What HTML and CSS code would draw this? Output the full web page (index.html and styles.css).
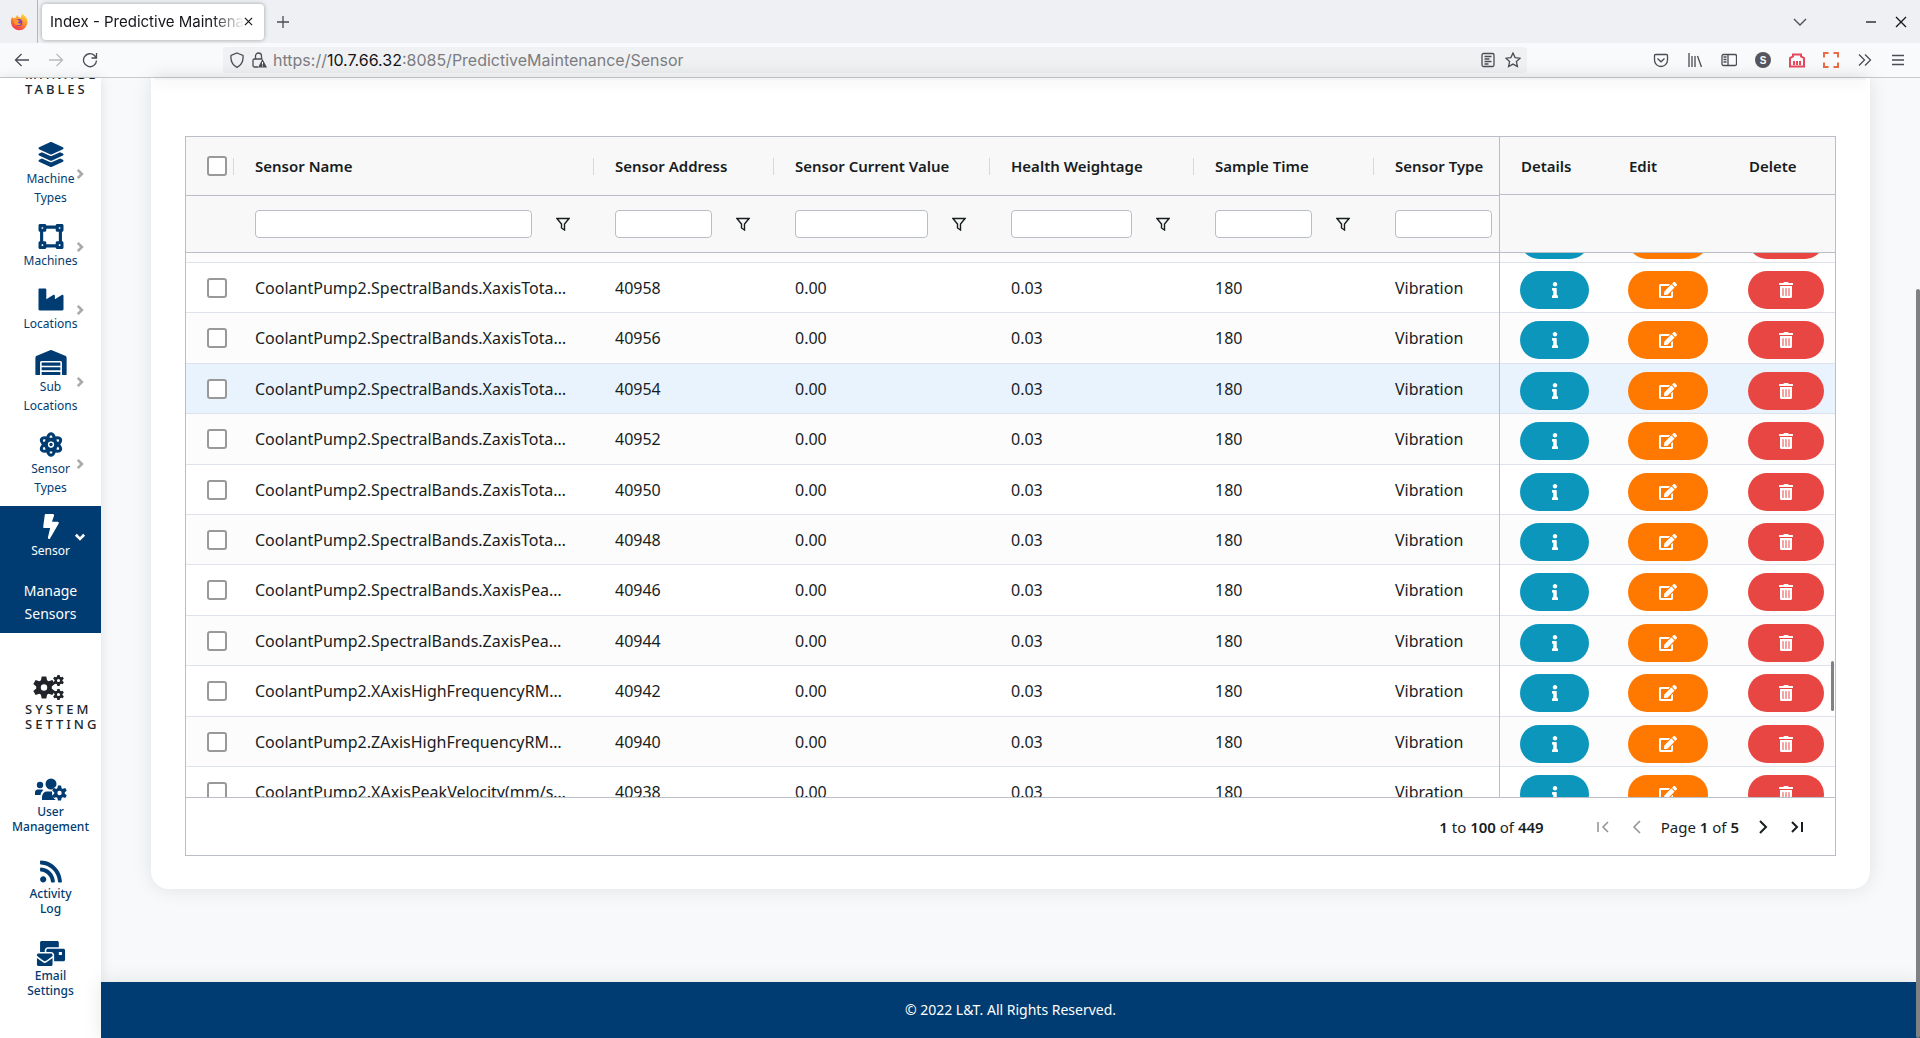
FILE: index.html
```html
<!DOCTYPE html>
<html lang="en">
<head>
    <meta charset="UTF-8">
    <meta name="viewport" content="width=device-width, initial-scale=1.0">
    <title>Index - Predictive Maintenance</title>
    <link rel="stylesheet" href="styles.css">
</head>
<body>

    <svg class="sprite" aria-hidden="true">
        <symbol id="i-info" viewBox="0 0 192 512"><path d="M20 424.229h20V279.771H20c-11.046 0-20-8.954-20-20V212c0-11.046 8.954-20 20-20h112c11.046 0 20 8.954 20 20v212.229h20c11.046 0 20 8.954 20 20V492c0 11.046-8.954 20-20 20H20c-11.046 0-20-8.954-20-20v-47.771c0-11.046 8.954-20 20-20zM96 0C56.235 0 24 32.235 24 72s32.235 72 72 72 72-32.235 72-72S135.764 0 96 0z"/></symbol>
        <symbol id="i-edit" viewBox="0 0 576 512"><path d="M402.6 83.2l90.2 90.2c3.8 3.8 3.8 10 0 13.8L274.4 405.6l-92.8 10.3c-12.4 1.4-22.9-9.1-21.5-21.5l10.3-92.8L388.8 83.2c3.8-3.8 10-3.8 13.8 0zm162-22.9l-48.8-48.8c-15.2-15.2-39.9-15.2-55.2 0l-35.4 35.4c-3.8 3.8-3.8 10 0 13.8l90.2 90.2c3.8 3.8 10 3.8 13.8 0l35.4-35.4c15.2-15.3 15.2-40 0-55.2zM384 346.2V448H64V128h229.8c3.2 0 6.2-1.3 8.5-3.5l40-40c7.6-7.6 2.2-20.5-8.5-20.5H48C21.5 64 0 85.5 0 112v352c0 26.5 21.5 48 48 48h352c26.5 0 48-21.5 48-48V306.2c0-10.7-12.9-16-20.5-8.5l-40 40c-2.2 2.3-3.5 5.3-3.5 8.5z"/></symbol>
        <symbol id="i-trash" viewBox="0 0 448 512"><path d="M32 464a48 48 0 0 0 48 48h288a48 48 0 0 0 48-48V128H32zm272-256a16 16 0 0 1 32 0v224a16 16 0 0 1-32 0zm-96 0a16 16 0 0 1 32 0v224a16 16 0 0 1-32 0zm-96 0a16 16 0 0 1 32 0v224a16 16 0 0 1-32 0zM432 32H312l-9.4-18.7A24 24 0 0 0 281.1 0H166.8a23.72 23.72 0 0 0-21.4 13.3L136 32H16A16 16 0 0 0 0 48v32a16 16 0 0 0 16 16h416a16 16 0 0 0 16-16V48a16 16 0 0 0-16-16z"/></symbol>
        <symbol id="i-filter" viewBox="0 0 14 14"><path d="M1 1.500h12L8.500 7v6L5.500 11V7z" fill="none" stroke="currentColor" stroke-width="1.400"/></symbol>
        <symbol id="i-chevron" viewBox="0 0 16 16"><path d="M5 2.500l5.500 5.500L5 13.500" fill="none" stroke="currentColor" stroke-width="3.500"/></symbol>
        <symbol id="i-gear" viewBox="-12 -12 24 24"><circle r="6" fill="none" stroke="currentColor" stroke-width="5"/><path d="M-2.500-12h5l1 5h-7zM-2.500 12h5l1-5h-7z"/><path transform="rotate(60)" d="M-2.500-12h5l1 5h-7zM-2.500 12h5l1-5h-7z"/><path transform="rotate(120)" d="M-2.500-12h5l1 5h-7zM-2.500 12h5l1-5h-7z"/></symbol>
    </svg>

    <header class="browser">
        <div class="tabs">
            <span class="fx">
                <svg width="18" height="18" viewBox="0 0 18 18"><defs><linearGradient id="fx" x1="0.800" y1="0" x2="0.300" y2="1"><stop offset="0" stop-color="#ffd83a"/><stop offset="0.500" stop-color="#ff8a2a"/><stop offset="1" stop-color="#f0304f"/></linearGradient></defs><path d="M2 4l1.500 1.500L6 4.500 7 2l2 2.500h2L12 1c4 2 5.500 5 5.500 8.500A8.300 8.300 0 0 1 1 10C.8 7.500 1 6 2 4z" fill="url(#fx)"/><circle cx="8.800" cy="9.500" r="3.500" fill="#7a3fc8"/><path d="M4 7c2-1.500 3-.5 4.500.2L10 8 8 9c0 1.500 2 2 3.500 1-1 3-6 3-7.500 0z" fill="#ff9a2a"/></svg>
            </span>
            <div class="tab">
                <span class="tab-title">Index - Predictive Maintenance</span>
                <button aria-label="Close tab"><svg width="9" height="9" viewBox="0 0 10 10"><path class="line" d="M1 1l8 8M9 1L1 9"/></svg></button>
            </div>
            <button class="new-tab" aria-label="New tab"><svg width="14" height="14" viewBox="0 0 14 14"><path class="line" d="M7 1v12M1 7h12"/></svg></button>
            <div class="window-buttons">
                <button class="list-tabs" aria-label="List all tabs"><svg width="14" height="14" viewBox="0 0 14 14"><path class="line" d="M1 4l6 6 6-6"/></svg></button>
                <button aria-label="Minimize"><svg width="12" height="12" viewBox="0 0 12 12"><path class="line" d="M1 6h10"/></svg></button>
                <button aria-label="Close window"><svg width="12" height="12" viewBox="0 0 12 12"><path class="line" d="M1 1l10 10M11 1L1 11"/></svg></button>
            </div>
        </div>
        <div class="toolbar">
            <button aria-label="Back"><svg width="16" height="16" viewBox="0 0 16 16"><path class="line" d="M15 8H1.500M7.500 2l-6 6 6 6"/></svg></button>
            <button aria-label="Forward" disabled><svg width="16" height="16" viewBox="0 0 16 16"><path class="line" d="M1 8h13.500M8.500 2l6 6-6 6"/></svg></button>
            <button aria-label="Reload"><svg width="16" height="16" viewBox="0 0 16 16"><path class="line" d="M14.500 8.500A6.500 6.500 0 1 1 12.500 3.500L14.500 6M14.500 1v5h-5"/></svg></button>
            <div class="url-bar">
                <svg width="16" height="16" viewBox="0 0 16 16"><path class="line" d="M8 1l6 2.500c.5 5-1.500 9.500-6 11.800C3.500 13 1.500 8.500 2 3.500z"/></svg>
                <svg width="16" height="16" viewBox="0 0 16 16"><path class="line" d="M4.500 7V4a3 3 0 0 1 6 0v3M7 15H3.500a1.500 1.500 0 0 1-1.500-1.500v-5A1.500 1.500 0 0 1 3.500 7h8"/><path d="M11.500 7l4.500 8.500H7z"/><path d="M11.500 10v2.500M11.500 13.500v1" stroke="#fff"/></svg>
                <span class="url">https://<b>10.7.66.32</b>:8085/PredictiveMaintenance/Sensor</span>
                <button aria-label="Reader view"><svg width="16" height="16" viewBox="0 0 16 16"><rect class="line" x="2" y="1.500" width="12" height="13" rx="1.500"/><path class="line" d="M4.500 4.500h7M4.500 7h5M4.500 9.500h7M4.500 12h4"/></svg></button>
                <button aria-label="Bookmark"><svg width="16" height="16" viewBox="0 0 16 16"><path class="line" d="M8 1l2.100 4.600 5 .6-3.700 3.400 1 5L8 12.100l-4.400 2.500 1-5L.9 6.200l5-.6z"/></svg></button>
            </div>
            <div class="tools">
                <button aria-label="Pocket"><svg width="16" height="16" viewBox="0 0 16 16"><path class="line" d="M1.500 3.500a1 1 0 0 1 1-1h11a1 1 0 0 1 1 1V8a6.500 6.500 0 0 1-13 0zM4.500 6.500L8 9.800l3.500-3.300"/></svg></button>
                <button aria-label="Library"><svg width="16" height="16" viewBox="0 0 16 16"><path class="line" d="M2 1v14M5 4v11M8 4v11M10.500 4l4 11"/></svg></button>
                <button aria-label="Sidebars"><svg width="16" height="16" viewBox="0 0 16 16"><rect class="line" x="1" y="2.500" width="14.500" height="11" rx="1.500"/><path class="line" d="M7 2.500v11M2.500 5h3M2.500 7.500h3M2.500 10h3"/></svg></button>
                <button class="account" aria-label="Account">S</button>
                <button aria-label="Extension"><svg width="16" height="16" viewBox="0 0 16 16"><path class="line bold red" d="M1 14.500V6l3-1.500V2.500h8v2L15 6v8.500zM5 9v4M8 9v4M11 9v4"/></svg></button>
                <button aria-label="Screenshot"><svg width="16" height="16" viewBox="0 0 16 16"><path class="line bold orange" d="M1 5.500V1h4.500M10.500 1H15v4.500M15 10.500V15h-4.500M5.500 15H1v-4.500"/></svg></button>
                <button aria-label="More tools"><svg width="16" height="16" viewBox="0 0 16 16"><path class="line" d="M2 2.500L7.500 8 2 13.500M8 2.500L13.500 8 8 13.500"/></svg></button>
                <button aria-label="Menu"><svg width="14" height="16" viewBox="0 0 14 16"><path class="line" d="M1 3.500h12M1 8h12M1 12.500h12"/></svg></button>
            </div>
        </div>
    </header>

    <div class="page">
        <nav class="sidebar" id="sidebar">
            <div class="nav-heading">
                <svg class="nav-icon" viewBox="0 0 24 24"><path d="M2 3h20v18H2z"/></svg>
                MANAGE<br>TABLES
            </div>

            <a class="nav-item" href="#">
                <svg class="nav-icon" viewBox="0 0 512 512"><path d="M12.410 148.020l232.940 105.670c6.800 3.090 14.490 3.090 21.290 0l232.940-105.670c16.550-7.510 16.550-32.520 0-40.030L266.650 2.310a25.607 25.607 0 0 0-21.290 0L12.410 107.980c-16.550 7.510-16.550 32.530 0 40.040zm487.180 88.280l-58.090-26.330-161.640 73.270c-7.560 3.430-15.590 5.170-23.860 5.170s-16.290-1.740-23.860-5.170L70.510 209.970l-58.100 26.330c-16.550 7.500-16.550 32.500 0 40l232.940 105.590c6.800 3.080 14.490 3.080 21.290 0L499.590 276.300c16.550-7.500 16.550-32.500 0-40zm0 127.800l-57.870-26.230-161.860 73.370c-7.560 3.430-15.590 5.170-23.860 5.170s-16.290-1.740-23.860-5.170L70.290 337.870 12.410 364.100c-16.550 7.500-16.550 32.500 0 40l232.940 105.590c6.800 3.080 14.490 3.080 21.290 0L499.590 404.100c16.550-7.500 16.550-32.500 0-40z"/></svg>
                <span>Machine<br>Types</span>
                <svg class="arrow"><use href="#i-chevron"/></svg>
            </a>
            <a class="nav-item" href="#">
                <svg class="nav-icon" viewBox="0 0 512 512"><path d="M512 128V32c0-17.670-14.330-32-32-32h-96c-17.670 0-32 14.330-32 32H160c0-17.670-14.330-32-32-32H32C14.330 0 0 14.330 0 32v96c0 17.670 14.330 32 32 32v192c-17.670 0-32 14.330-32 32v96c0 17.670 14.330 32 32 32h96c17.670 0 32-14.330 32-32h192c0 17.670 14.330 32 32 32h96c17.670 0 32-14.330 32-32v-96c0-17.670-14.330-32-32-32V160c17.670 0 32-14.330 32-32zm-96-64h32v32h-32V64zM64 64h32v32H64V64zm32 384H64v-32h32v32zm352 0h-32v-32h32v32zm-32-96h-32c-17.670 0-32 14.330-32 32v32H160v-32c0-17.670-14.330-32-32-32H96V160h32c17.670 0 32-14.330 32-32V96h192v32c0 17.670 14.330 32 32 32h32v192z"/></svg>
                <span>Machines</span>
                <svg class="arrow"><use href="#i-chevron"/></svg>
            </a>
            <a class="nav-item" href="#">
                <svg class="nav-icon" viewBox="0 0 512 512"><path d="M475.115 163.781L336 252.309v-68.280c0-18.916-20.931-30.399-36.885-20.248L160 252.309V56c0-13.255-10.745-24-24-24H24C10.745 32 0 42.745 0 56v400c0 13.255 10.745 24 24 24h464c13.255 0 24-10.745 24-24V184.029c0-18.917-20.931-30.399-36.885-20.248z"/></svg>
                <span>Locations</span>
                <svg class="arrow"><use href="#i-chevron"/></svg>
            </a>
            <a class="nav-item" href="#">
                <svg class="nav-icon" viewBox="0 0 640 512"><path d="M504 352H136.400c-4.400 0-8 3.600-8 8l-.1 48c0 4.400 3.600 8 8 8H504c4.400 0 8-3.600 8-8v-48c0-4.400-3.600-8-8-8zm0 96H136.100c-4.400 0-8 3.600-8 8l-.1 48c0 4.400 3.600 8 8 8h368c4.400 0 8-3.600 8-8v-48c0-4.400-3.600-8-8-8zm0-192H136.600c-4.400 0-8 3.600-8 8l-.1 48c0 4.400 3.600 8 8 8H504c4.400 0 8-3.600 8-8v-48c0-4.400-3.600-8-8-8zm106.500-139L338.400 3.700a48.150 48.150 0 0 0-36.900 0L29.500 117C11.700 124.500 0 141.900 0 161.300V504c0 4.400 3.600 8 8 8h80c4.400 0 8-3.600 8-8V256c0-17.600 14.600-32 32.600-32h382.800c18 0 32.600 14.400 32.600 32v248c0 4.400 3.600 8 8 8h80c4.400 0 8-3.600 8-8V161.300c0-19.400-11.700-36.800-29.500-44.300z"/></svg>
                <span>Sub<br>Locations</span>
                <svg class="arrow"><use href="#i-chevron"/></svg>
            </a>
            <a class="nav-item" href="#">
                <svg class="nav-icon" viewBox="-256 -256 512 512"><g fill="none" stroke="currentColor" stroke-width="62"><ellipse rx="92" ry="222"/><ellipse rx="92" ry="222" transform="rotate(60)"/><ellipse rx="92" ry="222" transform="rotate(120)"/></g><path fill-rule="evenodd" d="M-110 0a110 110 0 1 0 220 0a110 110 0 1 0-220 0zM-64 0a64 64 0 1 1 128 0a64 64 0 1 1-128 0z"/><circle r="64" fill="#fff"/><circle r="34"/></svg>
                <span>Sensor<br>Types</span>
                <svg class="arrow"><use href="#i-chevron"/></svg>
            </a>
            <div class="nav-active">
                <a class="nav-item" href="#">
                    <svg class="nav-icon" viewBox="0 0 320 512"><path d="M296 160H180.600l42.600-129.800C227.200 15 215.700 0 200 0H56C44 0 33.800 8.900 32.200 20.800l-32 240C-1.700 275.200 9.500 288 24 288h118.700L96.600 482.500c-3.600 15.200 8 29.500 23.300 29.500 8.400 0 16.400-4.400 20.800-12l176-304c9.300-15.900-2.200-36-20.700-36z"/></svg>
                    <span>Sensor</span>
                    <svg class="arrow down"><use href="#i-chevron"/></svg>
                </a>
                <a class="nav-sub" href="#">Manage<br>Sensors</a>
            </div>

            <div class="nav-heading system">
                <svg class="nav-icon" viewBox="0 0 32 25"><use href="#i-gear" x="0" y="1" width="22" height="23"/><use href="#i-gear" x="20" y="0" width="11" height="11"/><use href="#i-gear" x="20" y="14" width="11" height="11"/></svg>
                SYSTEM<br>SETTING
            </div>

            <a class="nav-item compact" href="#">
                <svg class="nav-icon" viewBox="0 0 32 25"><circle cx="5" cy="8" r="3.200"/><circle cx="16" cy="7" r="5.500"/><path d="M0 18v-2.500A3 3 0 0 1 3 12.500h4l1.500.5C6.500 14.500 6 16 5.500 18zM7 23v-2c0-4 2-6.500 5-6.500h5.500c0 3 .5 7 3.500 8.500z"/><circle cx="24.500" cy="16" r="7.500" fill="#fff"/><use href="#i-gear" x="17" y="8" width="15" height="16"/></svg>
                <span>User<br>Management</span>
            </a>
            <a class="nav-item compact" href="#">
                <svg class="nav-icon" viewBox="0 0 448 512"><path d="M128.081 415.959c0 35.369-28.672 64.041-64.041 64.041S0 451.328 0 415.959s28.672-64.041 64.041-64.041 64.040 28.673 64.040 64.041zm175.660 47.250c-8.354-154.600-132.185-278.587-286.950-286.950C7.656 175.765 0 183.105 0 192.253v48.069c0 8.415 6.490 15.472 14.887 16.018 111.832 7.284 201.473 96.702 208.772 208.772.547 8.397 7.604 14.887 16.018 14.887h48.069c9.149.001 16.489-7.655 15.995-16.790zm144.249.288C439.596 229.677 251.465 40.445 16.503 32.010 7.473 31.686 0 38.981 0 48.016v48.068c0 8.625 6.835 15.645 15.453 15.999 191.179 7.839 344.627 161.316 352.465 352.465.353 8.618 7.373 15.453 15.999 15.453h48.068c9.034-.001 16.329-7.474 16.005-16.504z"/></svg>
                <span>Activity<br>Log</span>
            </a>
            <a class="nav-item compact" href="#">
                <svg class="nav-icon" viewBox="0 0 576 512"><path d="M160 448c-25.600 0-51.200-22.400-64-32-64-44.800-83.200-60.800-96-70.400V480c0 17.670 14.330 32 32 32h256c17.670 0 32-14.330 32-32V345.600c-12.800 9.600-32 25.600-96 70.400-12.800 9.600-38.400 32-64 32zm128-192H32c-17.670 0-32 14.330-32 32v16c25.600 19.200 22.400 19.200 115.200 86.400 9.600 6.400 28.800 25.600 44.800 25.600s35.200-19.200 44.800-22.400c92.800-67.200 89.600-67.200 115.200-86.400V288c0-17.670-14.330-32-32-32zm256-96H224c-17.670 0-32 14.330-32 32v32h96c33.210 0 60.590 25.420 63.710 57.820l.29-.22V416h192c17.670 0 32-14.330 32-32V192c0-17.670-14.330-32-32-32zm-32 128h-64v-64h64v64zm-352-96c0-35.290 28.710-64 64-64h224V32c0-17.670-14.330-32-32-32H96C78.330 0 64 14.330 64 32v192h96v-32z"/></svg>
                <span>Email<br>Settings</span>
            </a>
        </nav>

        <main class="content">
            <section class="card">
                <div class="card-header"></div>
                <div class="grid">
                    <div class="grid-panes">
                        <div class="pane" id="mainPane">
                            <table class="main-table">
                                <colgroup>
                                    <col class="c-check"><col class="c-name"><col class="c-address"><col class="c-value"><col class="c-health"><col class="c-time"><col class="c-type">
                                </colgroup>
                                <thead>
                                    <tr class="titles">
                                        <th class="check"><input type="checkbox" aria-label="Select all"></th>
                                        <th>Sensor Name</th>
                                        <th>Sensor Address</th>
                                        <th>Sensor Current Value</th>
                                        <th>Health Weightage</th>
                                        <th>Sample Time</th>
                                        <th>Sensor Type</th>
                                    </tr>
                                    <tr class="filters" id="filters">
                                        <td></td>
                                    </tr>
                                </thead>
                                <tbody id="sensorRows"></tbody>
                            </table>
                        </div>
                        <div class="pane pinned" id="pinnedPane">
                            <table>
                                <colgroup>
                                    <col class="c-details"><col class="c-edit"><col>
                                </colgroup>
                                <thead>
                                    <tr class="titles">
                                        <th>Details</th>
                                        <th>Edit</th>
                                        <th>Delete</th>
                                    </tr>
                                    <tr class="filters"><td colspan="3"></td></tr>
                                </thead>
                                <tbody id="actionRows"></tbody>
                            </table>
                        </div>
                        <div class="grid-scroll"></div>
                    </div>
                    <div class="pager">
                        <span class="summary"><b>1</b> to <b>100</b> of <b>449</b></span>
                        <button aria-label="First page" disabled><svg width="14" height="14" viewBox="0 0 14 14"><path class="line" d="M2 2v10M12 2L7 7l5 5"/></svg></button>
                        <button aria-label="Previous page" disabled><svg width="14" height="14" viewBox="0 0 14 14"><path class="line" d="M10 1L4 7l6 6"/></svg></button>
                        <span>Page <b>1</b> of <b>5</b></span>
                        <button aria-label="Next page"><svg width="14" height="14" viewBox="0 0 14 14"><path class="line" d="M4 1l6 6-6 6"/></svg></button>
                        <button aria-label="Last page"><svg width="14" height="14" viewBox="0 0 14 14"><path class="line" d="M12 2v10M2 2l5 5-5 5"/></svg></button>
                    </div>
                </div>
            </section>
            <footer class="footer">© 2022 L&amp;T. All Rights Reserved.</footer>
        </main>
        <div class="page-scroll"></div>
    </div>

    <script>
        const sensors = [
            ["SpectralBands.XaxisTota…", 40960],
            ["SpectralBands.XaxisTota…", 40958],
            ["SpectralBands.XaxisTota…", 40956],
            ["SpectralBands.XaxisTota…", 40954],
            ["SpectralBands.ZaxisTota…", 40952],
            ["SpectralBands.ZaxisTota…", 40950],
            ["SpectralBands.ZaxisTota…", 40948],
            ["SpectralBands.XaxisPea…", 40946],
            ["SpectralBands.ZaxisPea…", 40944],
            ["XAxisHighFrequencyRM…", 40942],
            ["ZAxisHighFrequencyRM…", 40940],
            ["XAxisPeakVelocity(mm/s…", 40938]
        ];
        const hovered = 40954;

        function icon(name) {
            return `<svg class="icon"><use href="#${name}"/></svg>`;
        }

        function drawFilters() {
            const columns = ["Sensor Name", "Sensor Address", "Sensor Current Value", "Health Weightage", "Sample Time", "Sensor Type"];
            document.getElementById("filters").innerHTML += columns.map(name => `
                <td><div class="filter">
                    <input type="text" aria-label="${name} filter">
                    <button aria-label="Open ${name} filter">${icon("i-filter")}</button>
                </div></td>`).join("");
        }

        function drawRows() {
            let rows = "";
            let actions = "";
            sensors.forEach(([name, address]) => {
                const cls = address === hovered ? "hovered" : "";
                rows += `
                    <tr class="${cls}">
                        <td class="check"><input type="checkbox" aria-label="Select ${address}"></td>
                        <td>CoolantPump2.${name}</td>
                        <td>${address}</td>
                        <td>0.00</td>
                        <td>0.03</td>
                        <td>180</td>
                        <td>Vibration</td>
                    </tr>`;
                actions += `
                    <tr class="${cls}">
                        <td><button class="btn details" aria-label="Details">${icon("i-info")}</button></td>
                        <td><button class="btn edit" aria-label="Edit">${icon("i-edit")}</button></td>
                        <td><button class="btn delete" aria-label="Delete">${icon("i-trash")}</button></td>
                    </tr>`;
            });
            document.getElementById("sensorRows").innerHTML = rows;
            document.getElementById("actionRows").innerHTML = actions;
        }

        drawFilters();
        drawRows();
        document.getElementById("mainPane").scrollTop = 40;
        document.getElementById("pinnedPane").scrollTop = 40;
        document.getElementById("sidebar").scrollTop = 38;
    </script>

</body>
</html>
```
FILE: styles.css
```css
* {
    box-sizing: border-box;
}

body {
    font-family: "Noto Sans", sans-serif;
    margin: 0;
    height: 100vh;
    display: flex;
    flex-direction: column;
    overflow: hidden;
    background-color: #f8f9fb;
    color: #181d1f;
}

button {
    display: flex;
    align-items: center;
    justify-content: center;
    padding: 0;
    border: none;
    background: none;
    color: inherit;
    cursor: pointer;
}

svg {
    fill: currentColor;
    flex-shrink: 0;
}

.sprite {
    display: none;
}

.line {
    fill: none;
    stroke: currentColor;
    stroke-width: 1.3;
}

.line.bold {
    stroke-width: 2;
}

.line.red {
    stroke: #e8475c;
}

.line.orange {
    stroke: #ec6a45;
}

/* browser bar */
.browser {
    font-family: Inter, sans-serif;
    flex-shrink: 0;
    color: #4b4c55;
    background-color: #f9fafb;
    border-bottom: 1px solid #c8cccd;
}

.tabs {
    display: flex;
    align-items: center;
    height: 43px;
    background-color: #eff0f3;
}

.fx {
    display: flex;
    align-items: center;
    justify-content: center;
    width: 38px;
    height: 43px;
    border-right: 1px solid #b5b6ba;
}

.tab {
    display: flex;
    align-items: center;
    width: 222px;
    height: 36px;
    margin-left: 4px;
    padding: 0 11px 0 8px;
    background: white;
    border-radius: 4px;
    box-shadow: 0 0 4px rgba(0, 0, 0, 0.35);
    color: #15141a;
}

.tab-title {
    flex: 1;
    overflow: hidden;
    white-space: nowrap;
    font-size: 15px;
    mask-image: linear-gradient(to left, transparent, black 32px);
}

.new-tab {
    margin-left: 12px;
}

.window-buttons {
    display: flex;
    gap: 18px;
    margin-left: auto;
    margin-right: 13px;
    color: #15141a;
}

.list-tabs {
    margin-right: 40px;
    color: #4b4c55;
}

.toolbar {
    display: flex;
    align-items: center;
    height: 34px;
    padding: 0 15px 0 14px;
    gap: 18px;
}

.toolbar button:disabled {
    color: #b9babd;
}

.url-bar {
    flex: 1;
    display: flex;
    align-items: center;
    gap: 6px;
    height: 26px;
    margin-left: 107px;
    margin-right: 108px;
    padding: 0 6px;
    background-color: #f0f1f3;
    border-radius: 4px;
}

.url-bar button + button {
    margin-left: 3px;
}

.url {
    flex: 1;
    font-size: 16px;
    color: #7c7d82;
}

.url b {
    font-weight: normal;
    color: #15141a;
}

.tools {
    display: flex;
    gap: 18px;
}

.tools .account {
    width: 16px;
    height: 16px;
    border-radius: 50%;
    background-color: #55565f;
    color: white;
    font-size: 10px;
    font-weight: bold;
}

.page {
    position: relative;
    flex: 1;
    min-height: 0;
    display: flex;
}

.page-scroll {
    position: absolute;
    right: 0;
    top: 211px;
    bottom: 0;
    width: 4px;
    background-color: #7f8182;
    border-radius: 2px;
}

/* sidebar */
.sidebar {
    width: 101px;
    flex-shrink: 0;
    overflow: hidden;
    background-color: white;
    box-shadow: 0 0 12px rgba(0, 0, 0, 0.1);
    padding-bottom: 80px;
    font-size: 12px;
    text-align: center;
}

.nav-heading {
    margin-bottom: 37px;
    padding-left: 25px;
    color: #212529;
    font-size: 13px;
    font-weight: 500;
    letter-spacing: 3px;
    line-height: 15px;
    text-align: left;
}

.nav-heading.system {
    margin-top: 42px;
}

.nav-icon {
    display: block;
    width: 32px;
    height: 25px;
    margin: 0 auto 2px;
}

.nav-heading .nav-icon {
    margin-left: 8px;
}

.nav-item {
    position: relative;
    display: block;
    padding: 8px 0 9px;
    color: #003c71;
    line-height: 19px;
    text-decoration: none;
}

.nav-item.compact {
    padding-bottom: 17px;
    font-weight: 500;
    line-height: 15px;
}

.arrow {
    position: absolute;
    top: calc(50% - 7px);
    right: 15px;
    width: 12px;
    height: 12px;
    color: #a9a9a9;
}

.arrow.down {
    color: white;
    transform: rotate(90deg);
}

.nav-active {
    background-color: #003c71;
}

.nav-active .nav-item,
.nav-sub {
    color: white;
}

.nav-sub {
    display: block;
    padding: 10px 0 8px;
    font-size: 14px;
    line-height: 23px;
    text-decoration: none;
}

/* content */
.content {
    flex: 1;
    min-width: 0;
    display: flex;
    flex-direction: column;
}

.card {
    margin: 0 50px;
    padding: 0 34px 33px;
    background: white;
    border-radius: 0 0 18px 18px;
    box-shadow: 0 0 20px rgba(0, 0, 0, 0.1);
}

.card-header {
    height: 2px;
    margin: 0 -30px 56px;
    background-color: #f3f4f5;
    box-shadow: 0 2px 14px rgba(0, 0, 0, 0.2);
}

.grid {
    border: 1px solid #babfc7;
}

.grid-panes {
    position: relative;
    display: flex;
    height: 660px;
}

.grid-scroll {
    position: absolute;
    right: 1px;
    top: 524px;
    width: 3px;
    height: 50px;
    background-color: #7f8182;
    border-radius: 2px;
}

.pane {
    flex: 1;
    overflow: hidden;
    background: white;
}

.pinned {
    flex: 0 0 336px;
    border-left: 1px solid #babfc7;
}

table {
    width: 100%;
    table-layout: fixed;
    border-collapse: separate;
    border-spacing: 0;
}

.main-table {
    width: 1368px;
}

.c-check {
    width: 48px;
}

.c-name {
    width: 360px;
}

.c-address,
.c-time,
.c-type {
    width: 180px;
}

.c-value {
    width: 216px;
}

.c-health {
    width: 204px;
}

.c-details {
    width: 108px;
}

.c-edit {
    width: 120px;
}

thead {
    position: sticky;
    top: 0;
    z-index: 1;
    background-color: #f8f8f8;
}

th,
td {
    padding: 0 21px;
    text-align: left;
    white-space: nowrap;
}

.titles th {
    height: 59px;
    border-bottom: 1px solid #babfc7;
    font-size: 15px;
    font-weight: 600;
}

/* short divider between the column titles */
.main-table .titles th:not(:last-child) {
    background: linear-gradient(#d5d8dc, #d5d8dc) right center / 1px 17px no-repeat;
}

.pinned .titles th {
    height: 58px;
}

.filters td {
    height: 57px;
    padding-right: 24px;
    border-bottom: 1px solid #babfc7;
}

.pinned .filters td {
    height: 58px;
}

.filter {
    display: flex;
    align-items: center;
    justify-content: space-between;
}

.filter input {
    flex: 1;
    min-width: 0;
    height: 28px;
    margin-right: 24px;
    border: 1px solid #babfc7;
    border-radius: 4px;
}

.filter .icon {
    width: 14px;
    height: 14px;
}

tbody td {
    height: 50px;
    border-bottom: 1px solid #dde2eb;
    background-color: white;
    font-size: 16px;
}

/* keeps the average row near 50.4px */
tbody tr:nth-child(5n+3) td,
tbody tr:nth-child(5n+5) td {
    height: 51px;
}

tbody tr:nth-child(odd) td {
    background-color: #fcfcfc;
}

tbody tr.hovered td {
    background-color: #e8f3fe;
}

.check {
    padding: 0 0 0 21px;
}

.check input {
    appearance: none;
    display: block;
    width: 20px;
    height: 20px;
    margin: 0;
    border: 2px solid #999;
    border-radius: 3px;
    background: white;
}

.btn {
    height: 38px;
    border-radius: 19px;
    color: white;
}

.btn .icon {
    width: 18px;
    height: 16px;
}

.details {
    width: 69px;
    background-color: #0d96bb;
}

.edit {
    width: 80px;
    background-color: #ff7900;
}

.delete {
    width: 76px;
    background-color: #e84643;
}

.pinned tbody td {
    padding: 4px 0 0 20px;
}

.pager {
    display: flex;
    align-items: center;
    justify-content: flex-end;
    gap: 14px;
    height: 58px;
    padding-right: 28px;
    border-top: 1px solid #babfc7;
    font-size: 15px;
}

.pager .summary {
    margin-right: 35px;
}

.pager b {
    font-weight: 600;
}

.pager button {
    width: 20px;
}

.pager button:disabled {
    color: #8f9294;
}

.pager .line {
    stroke-width: 2;
}

.pager button:disabled .line {
    stroke-width: 1.5;
}

.footer {
    margin-top: auto;
    height: 56px;
    background-color: #003c71;
    box-shadow: 0 0 20px rgba(0, 0, 0, 0.1);
    color: white;
    font-size: 14px;
    line-height: 56px;
    text-align: center;
}
```
